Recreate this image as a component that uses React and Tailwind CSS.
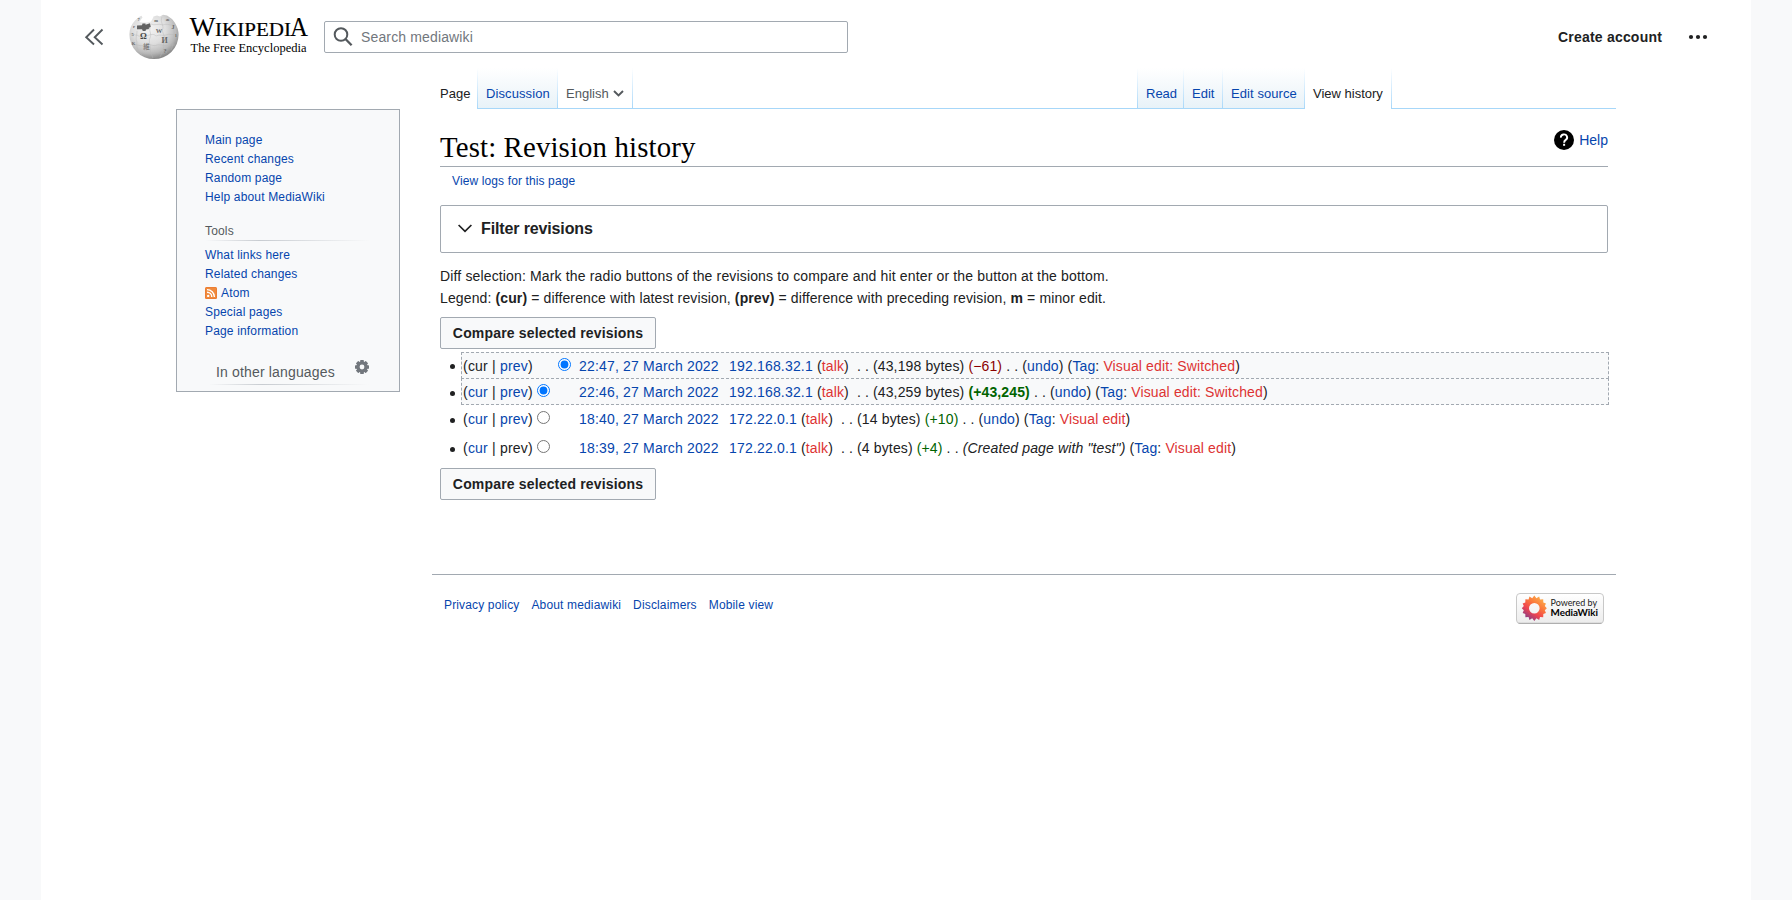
import React from "react";

const FONT = "font-['Liberation_Sans',Arial,sans-serif]";

function Link({ children, red, className = "" }) {
  return (
    <a href="#" className={`${red ? "text-[#dd3333]" : "text-[#0645ad]"} ${className}`}>
      {children}
    </a>
  );
}

function Globe() {
  return (
    <svg width="50" height="46" viewBox="0 0 50 46" className="shrink-0">
      <defs>
        <radialGradient id="globe" cx="0.4" cy="0.32" r="0.68">
          <stop offset="0" stopColor="#f4f4f4" />
          <stop offset="0.5" stopColor="#dedede" />
          <stop offset="0.8" stopColor="#bbbbbb" />
          <stop offset="1" stopColor="#8a8a8a" />
        </radialGradient>
      </defs>
      <path
        d="M6 6.5 L10 3 L12.5 1.8 L13.5 3.5 L12 5.5 L10.500 8 L13 8.500 L18 8.500 L22 7.5 L24 4 L24.5 2.5 L28 1.5 L31 2.5 L34 .8 L38 1.5 L43 5 C47 9.500 49.600 15 49.600 20.500 A24.600 24.600 0 0 1 .4 20.500 C.4 15 2.500 10 6 6.500Z"
        fill="url(#globe)"
      />
      <path
        d="M8 11.500 L13 11.200 L13.500 9.500 L16.500 9.500 L16.500 10.800 L21 9.200 L21.800 13 L19.500 14 L20.500 15 L17 15.500 L16.500 17 L13.800 17 L13 15.200 L8 15.300Z"
        fill="#636363"
      />
      <g fill="none" stroke="#b8b8b8" strokeWidth="0.450">
        <path d="M8 17 C8 22 6 24 8 28 C7 33 9 37 13 41" />
        <path d="M21 14 C20 18 23 20 21 24 C19 28 22 31 21 35 C21 39 23 41 24 44" />
        <path d="M33 3 C31 8 34 10 34 14 C32 18 36 20 35 25 C33 29 36 31 34 36 C33 39 32 41 31 43" />
        <path d="M44 8 C43 13 46 16 45 21 C43 27 45 31 42 36" />
        <path d="M1 20 C5 19 6 22 8 21 C12 24 15 21 17 22 C21 21 24 19 27 22 C31 20 34 22 37 21 C41 19 44 22 49 20" />
        <path d="M3 31 C8 30 12 33 16 31 C20 29 24 33 28 31 C33 30 36 33 40 31 L46 31" />
        <path d="M22 10 C26 12 29 9 34 11 C38 9 42 12 46 11" />
        <path d="M10 39 C15 38 18 40 22 39 C27 37 31 41 38 38" />
      </g>
      <g fill="#666" fontFamily="'Liberation Serif', serif" fontWeight="700" textAnchor="middle">
        <text x="14.500" y="25" fontSize="8.500" fill="#444">Ω</text>
        <text x="30" y="18.500" fontSize="6.500">W</text>
        <text x="35.500" y="29" fontSize="8">И</text>
        <text x="5" y="14" fontSize="4.500">r</text>
        <text x="3.500" y="22" fontSize="4.500">5</text>
        <text x="4.500" y="31" fontSize="4.500">K</text>
        <text x="9.500" y="6.500" fontSize="4.500">7</text>
        <text x="27" y="8" fontSize="4.500">m</text>
        <text x="38.500" y="7" fontSize="5">ж</text>
        <text x="44" y="15" fontSize="6">J</text>
        <text x="47" y="23" fontSize="4.500">l</text>
        <text x="36" y="39" fontSize="6">?</text>
      </g>
      <text x="17.500" y="35" fontSize="6.500" fill="#666" fontFamily="'Noto Sans CJK JP', sans-serif" textAnchor="middle">維</text>
    </svg>
  );
}

function Wordmark() {
  return (
    <svg width="120" height="44" viewBox="0 -4 120 44" className="shrink-0 overflow-visible" fill="#000" fontFamily="'Liberation Serif', serif">
      <text y="21.300">
        <tspan x="-0.500" fontSize="26.500" textLength="26" lengthAdjust="spacingAndGlyphs">W</tspan>
        <tspan x="25" fontSize="19" textLength="76" lengthAdjust="spacingAndGlyphs" stroke="#000" strokeWidth="0.200">IKIPEDI</tspan>
        <tspan x="100" fontSize="26.500" textLength="18" lengthAdjust="spacingAndGlyphs">A</tspan>
      </text>
      <text x="0.500" y="36.600" fontSize="13.500" textLength="116" lengthAdjust="spacingAndGlyphs">
        The Free Encyclopedia
      </text>
    </svg>
  );
}

function Header() {
  return (
    <header className="flex h-[68px] w-full items-start">
      <svg width="20" height="20" viewBox="0 0 20 20" className="mt-[27px] ml-[43px] shrink-0" fill="none" stroke="#54595d" strokeWidth="1.900">
        <path d="M10 2.500 L2.200 10.200 L10 17.500 M18.500 2.500 L10.700 10.200 L18.500 17.500" />
      </svg>
      <div className="mt-3.5 ml-[25px]"><Globe /></div>
      <div className="mt-[11px] ml-[11px]"><Wordmark /></div>
      <div className="mt-[21px] ml-[14px] flex h-8 w-[524px] items-center rounded-[2px] border border-[#a2a9b1] bg-white">
        <svg width="20" height="20" viewBox="0 0 20 20" className="ml-2 shrink-0" fill="none" stroke="#54595d" strokeWidth="2">
          <circle cx="8" cy="7.500" r="6.300" />
          <path d="M12.500 12 L18.600 18.300" strokeWidth="2.300" />
        </svg>
        <span className="ml-2 text-[14px] tracking-[0.14px] text-[#72777d]">Search mediawiki</span>
      </div>
      <div className="mt-[21px] mr-[43px] ml-auto flex h-8 items-center">
        <a href="#" className="text-[14px] font-bold tracking-[0.2px] text-[#202122]">Create account</a>
        <svg width="20" height="20" viewBox="0 0 20 20" className="ml-[26px]" fill="#202122">
          <circle cx="3" cy="10" r="2.100" />
          <circle cx="10" cy="10" r="2.100" />
          <circle cx="17" cy="10" r="2.100" />
        </svg>
      </div>
    </header>
  );
}

function SideLinks({ items }) {
  return (
    <ul className="text-[12px] leading-[19px] tracking-[0.16px]">
      {items.map((t) => (
        <li key={t} className="flex h-[19px] items-center">
          {t === "Atom" && (
            <svg width="12" height="12" viewBox="0 0 12 12" className="-mt-0.5 mr-1">
              <rect width="12" height="12" rx="1.500" fill="#e8732a" />
              <rect x="0.500" y="0.500" width="11" height="11" rx="1" fill="#f08a3c" />
              <circle cx="3.200" cy="8.900" r="1.200" fill="#fff" />
              <path d="M2 5.200 A4.800 4.800 0 0 1 6.800 10 M2 2.600 A7.400 7.400 0 0 1 9.400 10" fill="none" stroke="#fff" strokeWidth="1.400" />
            </svg>
          )}
          <Link>{t}</Link>
        </li>
      ))}
    </ul>
  );
}

function Gear() {
  return (
    <svg width="14" height="14" viewBox="0 0 14 14" className="-mt-[10px] mr-[30px] ml-auto">
      <g fill="#72777d">
        {[0, 45, 90, 135].map((a) => (
          <rect key={a} x="5.200" y="0" width="3.600" height="14" rx="0.600" transform={`rotate(${a} 7 7)`} />
        ))}
        <circle cx="7" cy="7" r="5.700" />
      </g>
      <circle cx="7" cy="7" r="2.400" fill="#f8f9fa" />
    </svg>
  );
}

function Sidebar() {
  return (
    <nav className="mt-[41px] flex h-[283px] w-[224px] shrink-0 flex-col border border-[#a2a9b1] bg-[#f8f9fa]">
      <div className="pt-[21px] pl-7">
        <SideLinks items={["Main page", "Recent changes", "Random page", "Help about MediaWiki"]} />
        <h3 className="mt-[15px] h-[18px] text-[12px] leading-[19px] tracking-[0.16px] text-[#54595d]">Tools</h3>
        <div className="h-px w-[165px] bg-linear-to-r from-transparent via-[#c8ccd1] via-33% to-transparent" />
        <div className="mt-[5px]">
          <SideLinks items={["What links here", "Related changes", "Atom", "Special pages", "Page information"]} />
        </div>
      </div>
      <div className="mt-[21px] flex h-[20px] items-center pl-[39px]">
        <span className="text-[14px] tracking-[0.16px] text-[#54595d]">In other languages</span>
        <Gear />
      </div>
      <div className="mt-[2px] ml-8 h-px w-[160px] bg-linear-to-r from-transparent via-[#c8ccd1] via-33% to-transparent" />
    </nav>
  );
}

function Tab({ children, kind = "link", className = "" }) {
  const look =
    kind === "link"
      ? "border-b border-[#a7d7f9] bg-linear-to-b from-white to-[#e8f2f8] text-[#0645ad]"
      : kind === "active"
        ? "bg-white text-[#202122]"
        : "border-b border-[#a7d7f9] bg-white text-[#54595d]";
  return (
    <div className="flex h-[41px] shrink-0">
      <a href="#" className={`flex h-[41px] items-start pt-[18px] pl-2 text-[13px] leading-[15px] ${look} ${className}`}>{children}</a>
      <span className="h-[41px] w-px bg-linear-to-b from-white to-[#a7d7f9]" />
    </div>
  );
}

function Tabs() {
  return (
    <div className="flex h-[41px] w-full">
      <Tab kind="active" className="w-[45px]">Page</Tab>
      <Tab className="w-[79px] tracking-[0.1px]">Discussion</Tab>
      <Tab kind="menu" className="w-[74px]">
        English
        <svg width="11" height="8" viewBox="0 0 11 8" className="mt-[4px] ml-[4px]" fill="none" stroke="#54595d" strokeWidth="1.900">
          <path d="M1 1 L5.500 5.500 L10 1" />
        </svg>
      </Tab>
      <div className="flex-1 border-b border-[#a7d7f9]" />
      <span className="h-[41px] w-px bg-linear-to-b from-white to-[#a7d7f9]" />
      <Tab className="w-[45px]">Read</Tab>
      <Tab className="w-[38px]">Edit</Tab>
      <Tab className="w-[81px] tracking-[0.08px]">Edit source</Tab>
      <Tab kind="active" className="w-[86px]">View history</Tab>
      <div className="w-[224px] border-b border-[#a7d7f9]" />
    </div>
  );
}

function CompareButton() {
  return (
    <button className="block h-8 w-[216px] rounded-[2px] border border-[#a2a9b1] bg-[#f8f9fa] text-[14px] font-bold tracking-[0.165px] whitespace-nowrap text-[#202122]">
      Compare selected revisions
    </button>
  );
}

const REVISIONS = [
  { cur: false, prev: true, col: 1, on: true, date: "22:47, 27 March 2022", user: "192.168.32.1", size: "43,198 bytes", diff: "(−61)", tone: "text-[#8b0000]", undo: true, tag: "Visual edit: Switched", box: true, row: "h-[27px] border border-dashed border-[#a2a9b1] bg-[#f8f9fa]" },
  { cur: true, prev: true, col: 0, on: true, date: "22:46, 27 March 2022", user: "192.168.32.1", size: "43,259 bytes", diff: "(+43,245)", tone: "font-bold text-[#006400]", undo: true, tag: "Visual edit: Switched", box: true, row: "-mt-px h-[27px] border border-dashed border-[#a2a9b1] bg-[#f8f9fa]" },
  { cur: true, prev: true, col: 0, date: "18:40, 27 March 2022", user: "172.22.0.1", size: "14 bytes", diff: "(+10)", tone: "text-[#006400]", undo: true, tag: "Visual edit", row: "h-[29px] border border-transparent" },
  { cur: true, prev: false, col: 0, date: "18:39, 27 March 2022", user: "172.22.0.1", size: "4 bytes", diff: "(+4)", tone: "text-[#006400]", note: '(Created page with "test")', tag: "Visual edit", row: "h-[29px] border border-transparent" },
];

function Revision({ r, i }) {
  return (
    <li className="flex">
      <span className={`mr-[6px] ml-[10px] h-[5px] w-[5px] shrink-0 rounded-full bg-[#202122] ${r.box ? "mt-[12px]" : "mt-[13px]"}`} />
      <div className={`-mr-px flex w-[1148px] shrink-0 items-start pl-px text-[14px] tracking-[0.133px] whitespace-pre leading-[26px] ${r.row}`}>
        <span className="w-[74px] tracking-[0.2px]">({r.cur ? <Link>cur</Link> : "cur"} | {r.prev ? <Link>prev</Link> : "prev"})</span>
        <span className={`flex w-[42px] pt-[5px] ${r.col ? "pl-[21px]" : ""}`}>
          <input type="radio" name={`rev${i}`} defaultChecked={!!r.on} className="m-0 h-[13px] w-[13px]" />
        </span>
        <span className="w-[150px] tracking-[0.180px]"><Link>{r.date}</Link></span>
        <span>
          <Link className="tracking-[0.180px]">{r.user}</Link> (<Link red>talk</Link>)<span className="ml-1"> . . </span>({r.size}) <span className={r.tone}>{r.diff}</span> . . {r.undo && <>(<Link>undo</Link>)</>}
          {r.note && <i>{r.note}</i>} (<Link>Tag</Link>: <Link red>{r.tag}</Link>)
        </span>
      </div>
    </li>
  );
}

function PoweredBy() {
  return (
    <svg width="88" height="31" viewBox="0 0 88 31">
      <defs>
        <linearGradient id="plate" x1="0" y1="0" x2="0" y2="1">
          <stop offset="0" stopColor="#fff" />
          <stop offset="1" stopColor="#ececec" />
        </linearGradient>
        <linearGradient id="flower" gradientUnits="userSpaceOnUse" x1="26" y1="5" x2="11" y2="26">
          <stop offset="0" stopColor="#fcb04c" />
          <stop offset="0.350" stopColor="#fb7a3c" />
          <stop offset="0.650" stopColor="#ef4350" />
          <stop offset="1" stopColor="#7c3c8c" />
        </linearGradient>
      </defs>
      <rect x="0.500" y="0.500" width="87" height="30" rx="3.500" fill="url(#plate)" stroke="#c8c8c8" />
      <path d="M2.500 30.300 H85.500" stroke="#a9a9a9" />
      <path
        transform="translate(-1.300 -1.200) scale(1.060)"
        fill="url(#flower)"
        fillRule="evenodd"
        d="M18.500 3.500 L20.500 6 L23.100 4.400 L23.900 7.300 L26.900 7.100 L27 10 L29.500 11 L28.400 13.500 L30.300 15.500 L28.400 17.500 L29.500 20 L27 21 L26.900 23.900 L23.900 23.700 L23.100 26.600 L20.500 25 L18.500 27.500 L16.500 25 L13.900 26.600 L13.100 23.700 L10.100 23.900 L10 21 L7.500 20 L8.600 17.500 L6.700 15.500 L8.600 13.500 L7.500 11 L10 10 L10.100 7.100 L13.100 7.300 L13.900 4.400 L16.500 6 Z M23.500 15.500 A5 5 0 1 0 13.500 15.500 A5 5 0 1 0 23.500 15.500 Z"
      />
      <g fontFamily="Lato, sans-serif">
        <text x="34.500" y="12.600" fontSize="9.200" textLength="46.500" lengthAdjust="spacingAndGlyphs" fill="#222">Powered by</text>
        <text x="34.500" y="22.800" fontSize="9.600" fontWeight="700" textLength="47.500" lengthAdjust="spacingAndGlyphs" fill="#000">MediaWiki</text>
      </g>
    </svg>
  );
}

function Content() {
  return (
    <main className="px-2 text-[#202122]">
      <div className="flex h-[58px] items-start justify-between border-b border-[#a2a9b1]">
        <h1 className="mt-[19px] font-['Liberation_Serif',serif] text-[28.8px] leading-[38px] tracking-[0.14px] text-black">Test: Revision history</h1>
        <div className="mt-[21px] flex h-5 items-center">
          <svg width="20" height="20" viewBox="0 0 20 20">
            <circle cx="10" cy="10" r="10" fill="#000" />
            <path d="M6.900 7.600 A3.100 3 0 1 1 11.700 9.900 C10.500 10.700 10.100 11.200 10.100 12.700" fill="none" stroke="#fff" strokeWidth="1.900" />
            <rect x="9.100" y="13.800" width="2" height="2" fill="#fff" />
          </svg>
          <Link className="ml-[5px] text-[14px]">Help</Link>
        </div>
      </div>
      <div className="flex h-[38px] pt-[5px] pl-3 text-[12px] leading-[18px] tracking-[0.12px]"><Link>View logs for this page</Link></div>
      <div className="flex h-12 items-center rounded-[2px] border border-[#a2a9b1] pl-[17px]">
        <svg width="14" height="9" viewBox="0 0 14 9" className="-mt-[2px]" fill="none" stroke="#202122" strokeWidth="1.700">
          <path d="M0.600 1 L7 7.400 L13.400 1" />
        </svg>
        <span className="ml-[9px] text-[16px] leading-5 font-bold tracking-[-0.130px]">Filter revisions</span>
      </div>
      <div className="mt-[12px] h-[52px] text-[14px] leading-[22.400px]">
        <p className="tracking-[0.148px]">Diff selection: Mark the radio buttons of the revisions to compare and hit enter or the button at the bottom.</p>
        <p className="tracking-[0.122px]">Legend: <b>(cur)</b> = difference with latest revision, <b>(prev)</b> = difference with preceding revision, <b>m</b> = minor edit.</p>
      </div>
      <CompareButton />
      <ul className="mt-[3px]">
        {REVISIONS.map((r, i) => <Revision key={i} r={r} i={i} />)}
      </ul>
      <div className="mt-[5px]"><CompareButton /></div>
    </main>
  );
}

export default function App() {
  return (
    <div className={`flex h-[900px] w-full justify-center overflow-hidden bg-[#f8f9fa] ${FONT}`}>
      <div className="flex w-[1710px] flex-col bg-white">
        <Header />
        <div className="flex pl-[135px]">
          <div className="flex h-[41px] shrink-0 items-start"><Sidebar /></div>
          <div className="ml-8 w-[1184px]">
            <Tabs />
            <Content />
            <footer className="mt-[74px] flex justify-between border-t border-[#a2a9b1] pr-3 pl-3">
              <div className="mt-[21px] flex gap-3 text-[12px] leading-[18px] tracking-[0.150px]">
                <Link>Privacy policy</Link>
                <Link>About mediawiki</Link>
                <Link>Disclaimers</Link>
                <Link>Mobile view</Link>
              </div>
              <div className="mt-[18px]"><PoweredBy /></div>
            </footer>
          </div>
        </div>
      </div>
    </div>
  );
}
